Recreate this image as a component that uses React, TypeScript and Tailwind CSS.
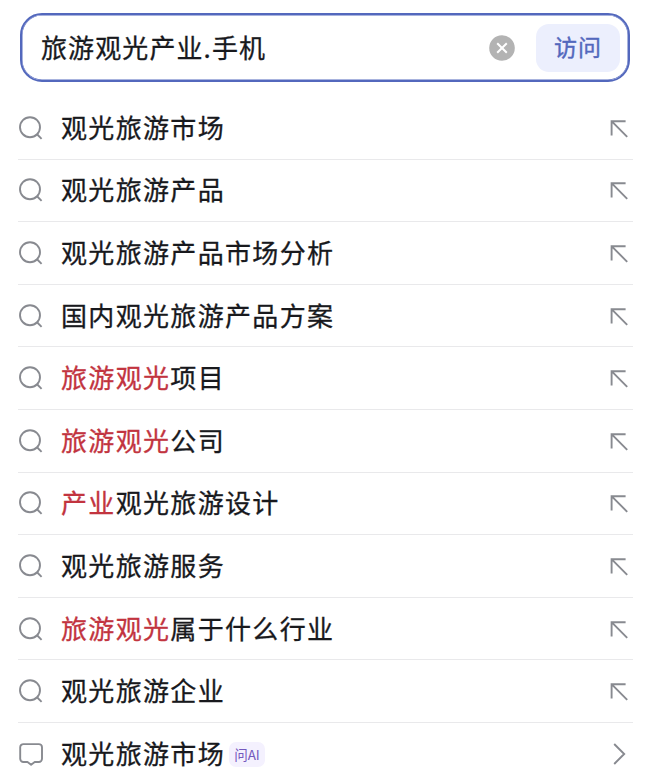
import React, { useState } from 'react';

interface Suggestion {
  match?: string;
  text: string;
  ai?: boolean;
}

const SUGGESTIONS: Suggestion[] = [
  { text: '观光旅游市场' },
  { text: '观光旅游产品' },
  { text: '观光旅游产品市场分析' },
  { text: '国内观光旅游产品方案' },
  { match: '旅游观光', text: '项目' },
  { match: '旅游观光', text: '公司' },
  { match: '产业', text: '观光旅游设计' },
  { text: '观光旅游服务' },
  { match: '旅游观光', text: '属于什么行业' },
  { text: '观光旅游企业' },
  { text: '观光旅游市场', ai: true },
];

const iconProps = {
  fill: 'none',
  stroke: 'currentColor',
  strokeWidth: 1.9,
} as const;

function SearchIcon() {
  return (
    <svg width="26" height="26" viewBox="0 0 26 26" {...iconProps}>
      <circle cx="12" cy="12.2" r="10" />
      <path d="M18.8 19l4.8 4.8" />
    </svg>
  );
}

function ChatIcon() {
  return (
    <svg width="26" height="26" viewBox="0 0 26 26" {...iconProps} strokeLinejoin="round">
      <path d="M5.4 3.1h15.4a3.2 3.2 0 0 1 3.2 3.2v11.5a3.2 3.2 0 0 1-3.2 3.2h-4.1L13.1 23.7 9.5 21H5.4a3.2 3.2 0 0 1-3.2-3.2V6.3a3.2 3.2 0 0 1 3.2-3.2z" />
    </svg>
  );
}

function FillArrowIcon() {
  return (
    <svg width="20" height="20" viewBox="0 0 20 20" {...iconProps}>
      <path d="M2.6 17.6V3.2h14M2.8 3.4l15.4 15.4" />
    </svg>
  );
}

function ChevronIcon() {
  return (
    <svg width="20" height="24" viewBox="0 0 20 24" {...iconProps}>
      <path d="M5.2 2l10 10-10 10" />
    </svg>
  );
}

export default function App() {
  const [query, setQuery] = useState('旅游观光产业.手机');

  return (
    <div className="h-[783px] w-[650px] overflow-hidden bg-white pt-[13px] font-['Noto_Sans_CJK_SC',sans-serif] text-[#18191d]">
      {/* Address bar */}
      <div className="ml-[20px] flex h-[69px] w-[610px] items-center rounded-[22px] border-2 border-[#5368bd] pr-[8px] pl-[19px] shadow-[inset_0_0_0_0.5px_#5368bd]">
        <input
          type="text"
          value={query}
          onChange={(e) => setQuery(e.target.value)}
          className="min-w-0 flex-1 pb-[3px] text-[26px] tracking-[1.1px] outline-none [-webkit-text-stroke:0.3px]"
        />
        <button type="button" onClick={() => setQuery('')} aria-label="清除" className="mr-[21px]">
          <svg width="26" height="26" viewBox="0 0 26 26">
            <circle cx="13" cy="13" r="12.8" fill="#b3b3b3" />
            <path d="M8.2 8.2l9.6 9.6M17.8 8.2l-9.6 9.6" stroke="#fff" strokeWidth="2" />
          </svg>
        </button>
        <button
          type="button"
          className="h-[48px] w-[84px] rounded-[13px] bg-[#eceffd] pb-[4px] text-[23px] leading-[44px] tracking-[1px] text-[#5368bd] [-webkit-text-stroke:0.4px]"
        >
          访问
        </button>
      </div>

      {/* Suggestions */}
      <ul className="mt-[15px] mr-[17px] ml-[18px]">
        {SUGGESTIONS.map((item, index) => (
          <li
            key={index}
            className="flex h-[62.6px] items-center border-b border-[#e9e9eb] text-[#888a90] last:border-b-0"
          >
            {item.ai ? <ChatIcon /> : <SearchIcon />}
            <span className="ml-[17px] pb-[2px] text-[26px] leading-[40px] tracking-[1.33px] whitespace-nowrap text-[#18191d] [-webkit-text-stroke:0.3px]">
              {item.match && <span className="text-[#c2343f]">{item.match}</span>}
              {item.text}
            </span>
            {item.ai && (
              <span className="ml-[4px] h-[25px] w-[36px] rounded-[7px] bg-[#f4f1fe] text-center text-[13.5px] leading-[24px] text-[#7459bd]">
                问AI
              </span>
            )}
            <span className="mr-[4px] ml-auto">
              {item.ai ? <ChevronIcon /> : <FillArrowIcon />}
            </span>
          </li>
        ))}
      </ul>
    </div>
  );
}
